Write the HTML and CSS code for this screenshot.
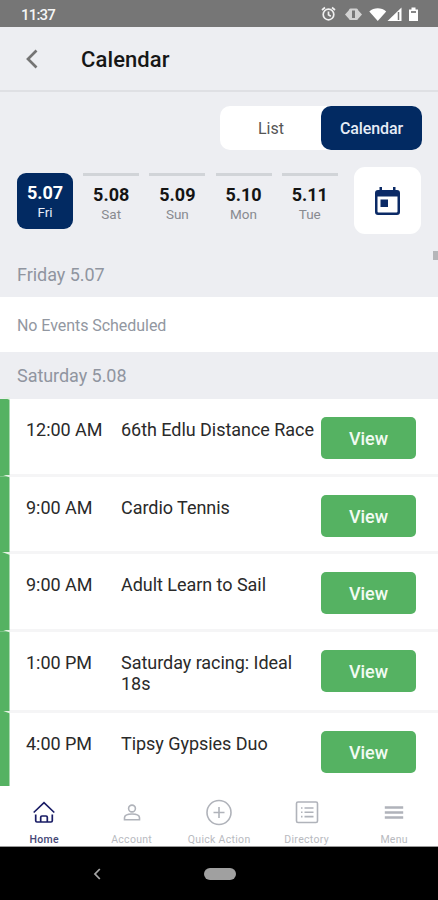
FILE: index.html
```html
<!DOCTYPE html>
<html lang="en">
<head>
<meta charset="utf-8">
<title>Calendar</title>
<link rel="stylesheet" href="styles.css">
</head>
<body>
<div class="phone">
  <div class="status">
    <span class="clock">11:37</span>
    <svg class="status-icons" width="100" height="18" viewBox="0 0 100 18">
      <g fill="none" stroke="#f0f0f0" stroke-width="1.700">
        <circle cx="10.500" cy="9.500" r="5.300"/>
        <path d="M10.500 6.500v3.300l2.300 1.400M4 5l3-2.500M17 5l-3-2.500"/>
      </g>
      <g fill="#d2d2d2"><rect x="31" y="3.500" width="9" height="11.500" rx="1.500"/><path d="M31.500 4.500v10l-4.500-5zM39.500 4.500v10l4.500-5z"/></g>
      <rect x="34" y="5.500" width="3" height="7.500" fill="#777"/>
      <g fill="#fff">
        <path d="M51.300 6.500C56 2.300 63.500 2.300 68.200 6.500L59.750 16z"/>
        <path d="M69.500 16L83.500 2.500V16z"/>
        <path d="M91 4.500h2.500V2.500h4v2h2.500V16h-9z"/>
      </g>
      <path d="M80.500 7v8" stroke="#777" stroke-width="1.500"/>
      <rect x="93" y="6" width="5" height="2" fill="#888"/>
    </svg>
  </div>
  <header class="header">
    <svg class="back" width="14" height="20" viewBox="0 0 14 20"><path d="M11.500 1.500L3 10l8.500 8.500" fill="none" stroke="#747474" stroke-width="2.700"/></svg>
    <h1>Calendar</h1>
  </header>
  <div class="toggle"><span class="off">List</span><span class="on">Calendar</span></div>
  <div class="days">
    <div class="day selected"><b>5.07</b><span>Fri</span></div>
    <div class="day"><b>5.08</b><span>Sat</span></div>
    <div class="day"><b>5.09</b><span>Sun</span></div>
    <div class="day"><b>5.10</b><span>Mon</span></div>
    <div class="day"><b>5.11</b><span>Tue</span></div>
    <div class="picker">
      <svg width="27" height="30" viewBox="0 0 27 30"><path fill="#0b2a66" fill-rule="evenodd" d="M5.500 1h2.500v3h11V1h2.500v3h1.500a3 3 0 0 1 3 3v19a3 3 0 0 1-3 3H4a3 3 0 0 1-3-3V7a3 3 0 0 1 3-3h1.500zM3.500 10.500v15a1 1 0 0 0 1 1h18a1 1 0 0 0 1-1v-15z"/><rect x="6.500" y="13.500" width="7.500" height="7.500" fill="#0b2a66"/></svg>
    </div>
    <i class="thumb"></i>
  </div>
  <h2 class="first">Friday 5.07</h2>
  <p class="empty">No Events Scheduled</p>
  <h2 class="second">Saturday 5.08</h2>
  <main>
    <div class="event"><time>12:00 AM</time><span class="name wide">66th Edlu Distance Race</span><button>View</button></div>
    <div class="event"><time>9:00 AM</time><span class="name">Cardio Tennis</span><button>View</button></div>
    <div class="event"><time>9:00 AM</time><span class="name">Adult Learn to Sail</span><button>View</button></div>
    <div class="event tall"><time>1:00 PM</time><span class="name">Saturday racing: Ideal 18s</span><button>View</button></div>
    <div class="event last"><time>4:00 PM</time><span class="name">Tipsy Gypsies Duo</span><button>View</button></div>
  </main>
  <nav class="tabs">
    <div class="tab active"><svg width="30" height="30" viewBox="0 0 30 30"><path d="M4.700 15.500L15 5.700 25.300 15.500M6.700 17.500v6.200q0 1.300 1.300 1.300h14q1.300 0 1.300-1.300v-6.200M11.700 25v-4.700q0-1.300 1.300-1.300h4q1.300 0 1.300 1.300V25" stroke-width="1.700"/></svg><span>Home</span></div>
    <div class="tab"><svg width="30" height="30" viewBox="0 0 30 30"><circle cx="15" cy="11.500" r="3.400"/><path d="M7.500 22.800v-2c0-2.500 3.500-3.800 7.500-3.800s7.500 1.300 7.500 3.800v2z"/></svg><span>Account</span></div>
    <div class="tab"><svg width="30" height="30" viewBox="0 0 30 30"><circle cx="15" cy="15.500" r="12"/><path d="M15 10v11M9.500 15.500h11"/></svg><span>Quick Action</span></div>
    <div class="tab"><svg width="30" height="30" viewBox="0 0 30 30"><rect x="4.500" y="5" width="21" height="20.500" rx="1.500"/><path d="M12.500 11h9M12.500 15.300h9M12.500 19.600h9M9 11h1.500M9 15.300h1.500M9 19.600h1.500"/></svg><span>Directory</span></div>
    <div class="tab"><svg width="30" height="30" viewBox="0 0 30 30"><path d="M5.800 10.500h18.400M5.800 15.500h18.400M5.800 20.500h18.400" stroke-width="2.400"/></svg><span>Menu</span></div>
  </nav>
  <footer class="system">
    <svg width="8" height="12" viewBox="0 0 8 12"><path d="M6.800 1L2 6l4.800 5" fill="none" stroke="#a5a5a5" stroke-width="1.800"/></svg>
    <i class="pill"></i>
  </footer>
</div>
</body>
</html>
```
FILE: styles.css
```css
* { box-sizing: border-box; }
body { margin: 0; font-family: Roboto, sans-serif; }
h1, h2, p { margin: 0; font-weight: 400; }
.phone { width: 438px; height: 900px; background: #edeef2; overflow: hidden; display: flex; flex-direction: column; }
.phone > * { flex-shrink: 0; }
.status { height: 27px; background: #767676; display: flex; align-items: flex-start; justify-content: space-between; padding: 5px 20px 0 21px; }
.clock { color: #f5f5f5; font-size: 15px; line-height: 20px; font-weight: 500; letter-spacing: -.8px; }
.status-icons { margin-right: 0; }
.header { height: 65px; display: flex; align-items: center; padding-left: 25px; border-bottom: 2px solid #dfe0e4; }
h1 { margin-left: 42px; color: #161616; font-size: 22px; font-weight: 500; line-height: 28px; padding-top: 2px; letter-spacing: .1px; }
.toggle { width: 202px; height: 44px; margin: 14px 16px 0 auto; background: #fff; border-radius: 10px; display: flex; text-align: center; line-height: 46px; font-size: 16px; }
.off { flex: 1; color: #555; padding-left: 1px; }
.on { width: 101px; background: #022a62; border-radius: 10px; color: #e6ecf6; font-weight: 500; letter-spacing: -.1px; }
.days { position: relative; height: 84px; padding: 17px 16px 0 17px; display: flex; align-items: flex-start; }
.day { width: 56px; height: 56px; margin: 6px 10.200px 0 0; border-top: 3px solid #d1d4d8; text-align: center; display: flex; flex-direction: column; color: #888a90; font-size: 13.500px; line-height: 18px; padding-top: 8px; }
.day b { color: #141414; font-size: 18px; line-height: 22px; font-weight: 700; }
.day span { margin-top: -1px; }
.selected { border: 0; background: #022a62; border-radius: 9px; color: #e9effa; padding-top: 9px; }
.selected b { color: #fff; }
.picker { width: 67px; height: 67px; margin-left: 6px; background: #fff; border-radius: 11px; display: flex; align-items: center; justify-content: center; flex-shrink: 0; }
.thumb { position: absolute; right: 0; bottom: -26px; width: 5px; height: 9px; background: #b5b6b9; }
h2 { color: #9095a0; font-size: 18px; line-height: 22px; padding-left: 17px; letter-spacing: -.05px; }
.first { height: 63px; padding-top: 30px; }
.empty { height: 55px; background: #fff; color: #9297a1; font-size: 16px; line-height: 57px; padding-left: 17px; letter-spacing: -.05px; }
.second { height: 47px; padding-top: 13px; }
main { background: #fff; height: 387px; }
.event { height: 77.500px; display: grid; grid-template-columns: 95px 200px 95px; padding: 20px 0 0 26px; color: #2a2a2a; font-size: 18px; line-height: 22px; letter-spacing: -.04px; background: linear-gradient(#55b262, #55b262) left / 9.500px 100% no-repeat, linear-gradient(#f5f5f6, #f5f5f6) left bottom / 100% 3px no-repeat; position: relative; align-items: start; }
.event::before { content: ""; position: absolute; left: 0; top: -2px; width: 10px; height: 3px; background: #e3f2e3; clip-path: polygon(20% 0, 100% 0, 100% 100%); }
.name { width: 190px; line-height: 21.500px; }
.wide { width: 200px; white-space: nowrap; }
.event button { width: 95px; height: 42px; margin-top: -2px; border: 0; border-radius: 5px; background: #55b262; color: #f1fbf2; font: 500 18px/42px Roboto, sans-serif; padding: 1px 0 0; }
.tall { height: 81px; }
.last { height: 73.500px; background: linear-gradient(#55b262, #55b262) left / 9.500px 100% no-repeat; }
.tabs { height: 61px; background: #fff; display: grid; grid-template-columns: repeat(5, 87.500px); padding-left: .4px; border-bottom: 1px solid #999; }
.tab { text-align: center; padding-top: 11px; display: flex; flex-direction: column; align-items: center; color: #b8bac0; font-size: 10.500px; line-height: 14px; letter-spacing: .3px; }
.tab svg { fill: none; stroke: #b0b3ba; stroke-width: 1.600; }
.tab span { margin-top: 6px; white-space: nowrap; }
.active { color: #454775; font-weight: 500; }
.active svg { stroke: #191c65; }
.system { height: 53px; background: #000; display: flex; align-items: center; padding-left: 93px; }
.pill { width: 32px; height: 12px; border-radius: 6px; background: #a0a0a0; margin-left: 103px; }
```
